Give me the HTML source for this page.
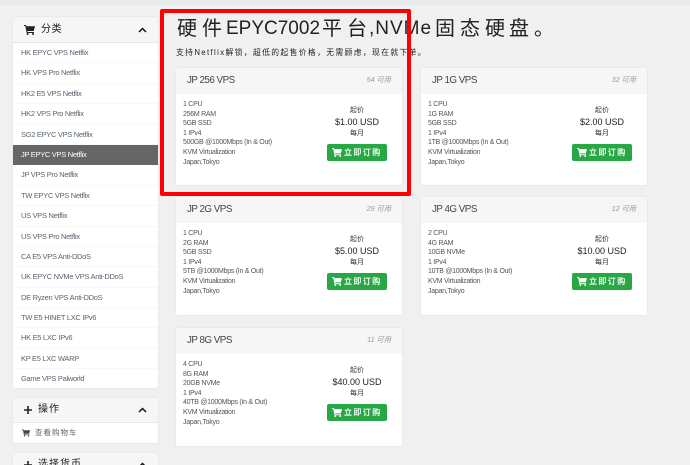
<!DOCTYPE html>
<html><head><meta charset="utf-8"><style>
html,body{margin:0;padding:0;height:465px;overflow:hidden}
body{width:690px;position:relative;background:#f0f0f0;font-family:"Liberation Sans","Noto Sans CJK SC",sans-serif;color:#333}
.a{position:absolute;white-space:nowrap}
#top{left:0;top:0;width:690px;height:5px;background:#e9ecef}
.panel{position:absolute;left:13px;width:145px;background:#fff;box-shadow:0 0 1px #ccc;border-radius:2px;overflow:hidden}
.ph{height:25px;background:#f6f6f6;border-bottom:1px solid #e8e8e8;position:relative;font-size:10px;line-height:25px;color:#222}
.ph span{position:absolute;left:25px;letter-spacing:1px}
.ph svg{position:absolute}
.it{height:20.4px;line-height:19.8px;font-size:7.5px;letter-spacing:-.3px;color:#5a6570;padding-left:8px;box-sizing:border-box;border-bottom:1px solid #f8f8f8;white-space:nowrap}
.it.on{background:#666;color:#fff;border:0}
.card{position:absolute;width:226px;background:#fff;box-shadow:0 0 1px #ccc;border-radius:2px}
.hd{position:absolute;left:0;top:0;width:226px;height:26px;background:#f6f6f6;font-size:9.8px;letter-spacing:-.5px;line-height:26px;color:#444}
.hd b{font-weight:normal;position:absolute;left:11px}
.hd i{position:absolute;right:11px;top:-1px;font-size:7.2px;letter-spacing:0;color:#999}
.sp{position:absolute;left:7px;top:32px;font-size:7px;letter-spacing:-.27px;line-height:9.6px;color:#555;white-space:nowrap}
.pr{position:absolute;left:151px;top:37px;width:60px;text-align:center;color:#333}
.pr div{white-space:nowrap}
.s{font-size:7px;line-height:11px}
.m{font-size:9px;line-height:12px;margin-bottom:0;color:#222}
.btn{position:absolute;left:151px;top:76px;width:60px;height:17px;background:#28a745;border-radius:2px;color:#fff;font-size:8px;line-height:17px;letter-spacing:1.4px;text-align:left;white-space:nowrap;box-sizing:border-box;padding-left:17px;-webkit-text-stroke:.2px #fff}
.btn svg{position:absolute;left:5px;top:4px}
.h{position:absolute;top:15px;font-size:20px;line-height:28px;color:#222;white-space:nowrap}
.l{font-size:19px}
</style></head><body>
<div class="a" id="top"></div>

<div class="panel" style="top:17px;height:371px">
<div class="ph"><svg style="left:11px;top:8px" width="11" height="10" viewBox="0 0 11 10"><path d="M0 0h2l.5 1.3H11L9.8 6H3.4l.2 1H10v1H2.700L1.300 1H0z" fill="#222"/><circle cx="3.600" cy="9" r="1" fill="#222"/><circle cx="9" cy="9" r="1" fill="#222"/></svg><span style="left:28px;letter-spacing:.5px">分类</span><svg style="left:125px;top:10px" width="9" height="6" viewBox="0 0 9 6"><path d="M1 5l3.500-3.500L8 5" fill="none" stroke="#111" stroke-width="1.500"/></svg></div>
<div class="it">HK EPYC VPS Netflix</div>
<div class="it">HK VPS Pro Netflix</div>
<div class="it">HK2 E5 VPS Netflix</div>
<div class="it">HK2 VPS Pro Netflix</div>
<div class="it">SG2 EPYC VPS Netflix</div>
<div class="it on">JP EPYC VPS Netflix</div>
<div class="it">JP VPS Pro Netflix</div>
<div class="it">TW EPYC VPS Netflix</div>
<div class="it">US VPS Netflix</div>
<div class="it">US VPS Pro Netflix</div>
<div class="it">CA E5 VPS Anti-DDoS</div>
<div class="it">UK EPYC NVMe VPS Anti-DDoS</div>
<div class="it">DE Ryzen VPS Anti-DDoS</div>
<div class="it">TW E5 HINET LXC IPv6</div>
<div class="it">HK E5 LXC IPv6</div>
<div class="it">KP E5 LXC WARP</div>
<div class="it">Game VPS Palworld</div>
</div>

<div class="panel" style="top:398px;height:45px">
<div class="ph" style="height:24px;line-height:24px"><svg style="left:11px;top:8px" width="8" height="8" viewBox="0 0 9 9"><path d="M3.600 0h1.800v3.600H9v1.800H5.400V9H3.600V5.400H0V3.600h3.600z" fill="#222"/></svg><span>操作</span><svg style="left:125px;top:9px" width="9" height="6" viewBox="0 0 9 6"><path d="M1 5l3.500-3.500L8 5" fill="none" stroke="#111" stroke-width="1.500"/></svg></div>
<svg style="position:absolute;left:9px;top:31px" width="8" height="8" viewBox="0 0 11 10"><path d="M0 0h2l.5 1.300H11L9.800 6H3.400l.2 1H10v1H2.700L1.300 1H0z" fill="#444"/><circle cx="3.600" cy="9" r="1" fill="#444"/><circle cx="9" cy="9" r="1" fill="#444"/></svg>
<div class="a" style="left:22px;top:29px;font-size:7.500px;line-height:12px;letter-spacing:1px;color:#666">查看购物车</div>
</div>

<div class="panel" style="top:453px;height:12px;border-radius:2px 2px 0 0">
<div class="ph" style="height:24px;line-height:24px"><svg style="left:11px;top:8px" width="8" height="8" viewBox="0 0 9 9"><path d="M3.600 0h1.800v3.600H9v1.800H5.400V9H3.600V5.400H0V3.600h3.600z" fill="#222"/></svg><span>选择货币</span><svg style="left:125px;top:9px" width="9" height="6" viewBox="0 0 9 6"><path d="M1 5l3.500-3.500L8 5" fill="none" stroke="#111" stroke-width="1.500"/></svg></div>
</div>

<span class="h" style="left:177px">硬</span><span class="h" style="left:202px">件</span>
<span class="h l" style="left:226px">EPYC7002</span>
<span class="h" style="left:322px">平</span><span class="h" style="left:347px">台</span>
<span class="h l" style="left:369px;letter-spacing:1px">,NVMe</span>
<span class="h" style="left:435px">固</span><span class="h" style="left:460px">态</span><span class="h" style="left:485px">硬</span><span class="h" style="left:509px">盘</span><span class="h" style="left:534px">。</span>
<div class="a" style="left:176px;top:46px;font-size:7.800px;line-height:14px;color:#222;letter-spacing:1.360px">支持Netflix解锁，超低的起售价格，无需顾虑，现在就下单。</div>

<div class="card" style="left:176px;top:68px;height:117px">
<div class="hd"><b>JP 256 VPS</b><i>54 可用</i></div>
<div class="sp">1 CPU<br>256M RAM<br>5GB SSD<br>1 IPv4<br>500GB @1000Mbps (In &amp; Out)<br>KVM Virtualization<br>Japan,Tokyo</div>
<div class="pr"><div class="s">起价</div><div class="m">$1.00 USD</div><div class="s">每月</div></div>
<div class="btn"><svg width="10" height="9" viewBox="0 0 11 10"><path d="M0 0h2l.5 1.300H11L9.800 6H3.400l.2 1H10v1H2.700L1.300 1H0z" fill="#fff"/><circle cx="3.600" cy="9" r="1" fill="#fff"/><circle cx="9" cy="9" r="1" fill="#fff"/></svg>立即订购</div>
</div>

<div class="card" style="left:421px;top:68px;height:117px">
<div class="hd"><b>JP 1G VPS</b><i>32 可用</i></div>
<div class="sp">1 CPU<br>1G RAM<br>5GB SSD<br>1 IPv4<br>1TB @1000Mbps (In &amp; Out)<br>KVM Virtualization<br>Japan,Tokyo</div>
<div class="pr"><div class="s">起价</div><div class="m">$2.00 USD</div><div class="s">每月</div></div>
<div class="btn"><svg width="10" height="9" viewBox="0 0 11 10"><path d="M0 0h2l.5 1.300H11L9.800 6H3.400l.2 1H10v1H2.700L1.300 1H0z" fill="#fff"/><circle cx="3.600" cy="9" r="1" fill="#fff"/><circle cx="9" cy="9" r="1" fill="#fff"/></svg>立即订购</div>
</div>

<div class="card" style="left:176px;top:197px;height:118px">
<div class="hd"><b>JP 2G VPS</b><i>29 可用</i></div>
<div class="sp">1 CPU<br>2G RAM<br>5GB SSD<br>1 IPv4<br>5TB @1000Mbps (In &amp; Out)<br>KVM Virtualization<br>Japan,Tokyo</div>
<div class="pr"><div class="s">起价</div><div class="m">$5.00 USD</div><div class="s">每月</div></div>
<div class="btn"><svg width="10" height="9" viewBox="0 0 11 10"><path d="M0 0h2l.5 1.300H11L9.800 6H3.400l.2 1H10v1H2.700L1.300 1H0z" fill="#fff"/><circle cx="3.600" cy="9" r="1" fill="#fff"/><circle cx="9" cy="9" r="1" fill="#fff"/></svg>立即订购</div>
</div>

<div class="card" style="left:421px;top:197px;height:118px">
<div class="hd"><b>JP 4G VPS</b><i>12 可用</i></div>
<div class="sp">2 CPU<br>4G RAM<br>10GB NVMe<br>1 IPv4<br>10TB @1000Mbps (In &amp; Out)<br>KVM Virtualization<br>Japan,Tokyo</div>
<div class="pr"><div class="s">起价</div><div class="m">$10.00 USD</div><div class="s">每月</div></div>
<div class="btn"><svg width="10" height="9" viewBox="0 0 11 10"><path d="M0 0h2l.5 1.300H11L9.800 6H3.400l.2 1H10v1H2.700L1.300 1H0z" fill="#fff"/><circle cx="3.600" cy="9" r="1" fill="#fff"/><circle cx="9" cy="9" r="1" fill="#fff"/></svg>立即订购</div>
</div>

<div class="card" style="left:176px;top:328px;height:118px">
<div class="hd"><b>JP 8G VPS</b><i>11 可用</i></div>
<div class="sp">4 CPU<br>8G RAM<br>20GB NVMe<br>1 IPv4<br>40TB @1000Mbps (In &amp; Out)<br>KVM Virtualization<br>Japan,Tokyo</div>
<div class="pr"><div class="s">起价</div><div class="m">$40.00 USD</div><div class="s">每月</div></div>
<div class="btn"><svg width="10" height="9" viewBox="0 0 11 10"><path d="M0 0h2l.5 1.300H11L9.800 6H3.400l.2 1H10v1H2.700L1.300 1H0z" fill="#fff"/><circle cx="3.600" cy="9" r="1" fill="#fff"/><circle cx="9" cy="9" r="1" fill="#fff"/></svg>立即订购</div>
</div>

<div class="a" style="left:160px;top:9px;width:251px;height:187px;box-sizing:border-box;border:4px solid #f00;border-radius:2px"></div>
</body></html>
